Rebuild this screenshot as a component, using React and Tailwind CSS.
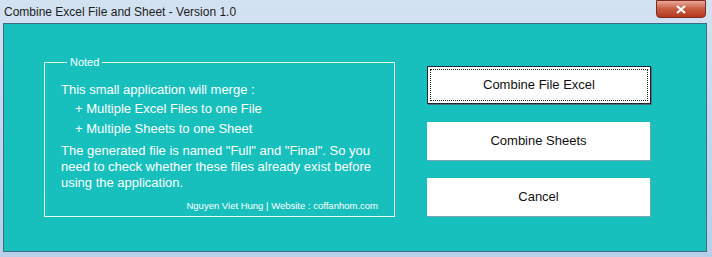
import React from 'react';

export default function App() {
    const lines = [
        { text: 'This small application will merge :', indent: false },
        { text: '+ Multiple Excel Files to one File', indent: true },
        { text: '+ Multiple Sheets to one Sheet', indent: true },
    ];

    return (
        <div
            className="w-[712px] h-[257px] overflow-hidden bg-gradient-to-b from-[#d3e2f1] via-[#c3d8ee] to-[#b7cfe8] flex flex-col"
            style={{ fontFamily: 'Tahoma, "Liberation Sans", Arial, sans-serif' }}
        >
            {/* title bar */}
            <div className="h-[23px] flex items-start justify-between pl-[4px] pr-[6px] shrink-0">
                <span className="mt-[3px] text-[12px] text-[#1e1e1e]">Combine Excel File and Sheet - Version 1.0</span>
                <button className="w-[50px] h-[18px] rounded-b-[4px] border border-[#7a2c20] bg-gradient-to-b from-[#e8a898] via-[#c75a40] to-[#b5381e] flex items-center justify-center">
                    <svg width="10" height="9" viewBox="0 0 10 9">
                        <path d="M1 1 L9 8 M9 1 L1 8" stroke="#fff" strokeWidth="2.2" />
                    </svg>
                </button>
            </div>

            {/* client */}
            <div className="ml-[3px] mr-[5px] h-[229px] border border-[#3e6b86] bg-[#17c0bd] flex pl-[40px] pt-[33px]">
                {/* group box */}
                <fieldset className="w-[351px] h-[160px] border border-white/90 px-[16px] pt-0 pb-0 m-0 flex flex-col">
                    <legend className="ml-[6px] px-[3px] text-[11px] text-white leading-none">Noted</legend>
                    <div className="text-[13px] text-white leading-[19px] mt-[12px]">
                        {lines.map((l) => (
                            <div key={l.text} className={l.indent ? 'pl-[14px] mb-[1px]' : ''}>{l.text}</div>
                        ))}
                        <div className="leading-[16px] mt-[5px]">
                            The generated file is named "Full" and "Final". So you need to check whether these files already exist before using the application.
                        </div>
                    </div>
                    <div className="mt-auto mb-[3px] text-right text-[9.5px] text-white">Nguyen Viet Hung | Website : coffanhom.com</div>
                </fieldset>

                {/* buttons */}
                <div className="ml-[32px] mt-[9px] flex flex-col gap-[18px]">
                    <button className="w-[224px] h-[38px] bg-white border border-[#1d2a33] shadow-[1px_1px_0_#4d6d7a] text-[13px] text-[#111] flex items-center justify-center p-[2px]">
                        <span className="w-full h-full border border-dotted border-[#222] flex items-center justify-center">Combine File Excel</span>
                    </button>
                    <button className="w-[223px] h-[38px] bg-white shadow-[1px_1px_0_#7aa6ad] text-[13px] text-[#111]">Combine Sheets</button>
                    <button className="w-[223px] h-[38px] bg-white shadow-[1px_1px_0_#7aa6ad] text-[13px] text-[#111]">Cancel</button>
                </div>
            </div>
        </div>
    );
}
